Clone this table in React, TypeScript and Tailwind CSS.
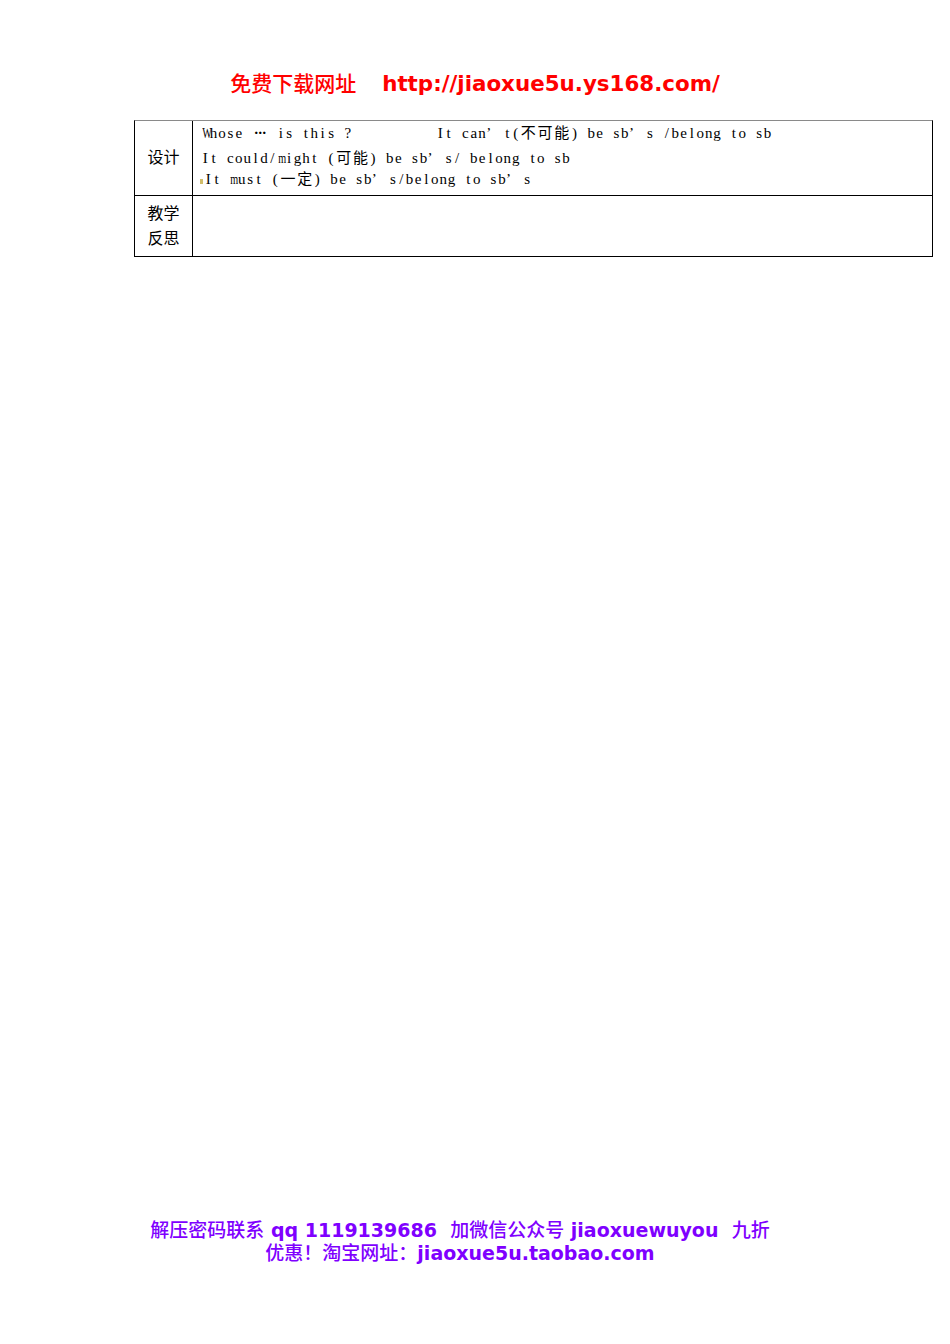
import React from "react";

const SERIF = { fontFamily: "'Liberation Serif','Noto Sans CJK SC',serif" };
const CJK = { fontFamily: "'Noto Sans CJK SC',sans-serif" };
const LAT = { fontFamily: "'DejaVu Sans','Noto Sans CJK SC',sans-serif" };

function Mono({ text }: { text: string }) {
  return (
    <>
      {Array.from(text).map((c, i) => {
        const code = c.charCodeAt(0);
        if (c === "\u2019") {
          return (
            <span key={i} className="inline-block w-[16.8px] text-left">
              {c}
            </span>
          );
        }
        if (c === "\u22EF") {
          return (
            <span key={i} className="inline-block w-[16.8px] text-center font-bold tracking-[-1px]">
              ···
            </span>
          );
        }
        if (code > 0x2000) {
          return (
            <span key={i} className="inline-block w-[16.8px] text-center" style={CJK}>
              {c}
            </span>
          );
        }
        if (c === "W" || c === "m" || c === "M" || c === "w") {
          return (
            <span key={i} className="inline-block w-[8.4px] text-center scale-x-[0.68]">
              {c}
            </span>
          );
        }
        return (
          <span key={i} className="inline-block w-[8.4px] text-center">
            {c === " " ? "\u00a0" : c}
          </span>
        );
      })}
    </>
  );
}

export default function App() {
  return (
    <div className="w-[950px] h-[1344px] bg-white flex flex-col text-black">
      <div className="pt-[68px] flex justify-center items-baseline gap-[26px] h-[96px] leading-[28px] text-[#ff0000]">
        <span className="text-[21px] font-medium" style={CJK}>
          免费下载网址
        </span>
        <span className="text-[21.4px] font-bold" style={LAT}>
          http://jiaoxue5u.ys168.com/
        </span>
      </div>

      <div className="ml-[134px] mt-[24px] w-[799px] border-x border-b border-t border-black border-t-[#8a8a8a]">
        <div className="flex h-[75px] border-b border-black">
          <div
            className="w-[58px] shrink-0 border-r border-black flex items-center justify-center pb-[3px] text-[16px] leading-[25px]"
            style={CJK}
          >
            设计
          </div>
          <div className="flex-1 pl-[8px] text-[15px] whitespace-nowrap" style={SERIF}>
            <div className="h-[21px] leading-[21px]">
              <Mono text={"Whose \u22EF is this ?          It can\u2019t(不可能) be sb\u2019s /belong to sb"} />
            </div>
            <div className="h-[29px] leading-[29px]">
              <Mono text={"It could/might (可能) be sb\u2019s/ belong to sb"} />
            </div>
            <div className="h-[14px] leading-[14px] -ml-[1px] flex items-center">
              <span className="inline-block w-[3px] h-[5px] bg-[#d1bd6a] mr-[1px] mt-[6px]" />
              <span>
                <Mono text={"It must (一定) be sb\u2019s/belong to sb\u2019s"} />
              </span>
            </div>
          </div>
        </div>
        <div className="flex h-[60px]">
          <div
            className="w-[58px] shrink-0 border-r border-black flex flex-col items-center justify-center pb-[2px] text-[16px] leading-[25px]"
            style={CJK}
          >
            <span>教学</span>
            <span>反思</span>
          </div>
          <div className="flex-1" />
        </div>
      </div>

      <div className="mt-auto pb-[80px] pr-[30px] flex flex-col items-center text-[19px] leading-[22px] text-[#7f00ff] whitespace-pre">
        <div>
          <span className="font-medium" style={CJK}>解压密码联系</span>
          <span className="font-bold" style={LAT}>{" qq 1119139686  "}</span>
          <span className="font-medium" style={CJK}>加微信公众号</span>
          <span className="font-bold" style={LAT}>{" jiaoxuewuyou  "}</span>
          <span className="font-medium" style={CJK}>九折</span>
        </div>
        <div>
          <span className="font-medium" style={CJK}>优惠！淘宝网址：</span>
          <span className="font-bold" style={LAT}>jiaoxue5u.taobao.com</span>
        </div>
      </div>
    </div>
  );
}
